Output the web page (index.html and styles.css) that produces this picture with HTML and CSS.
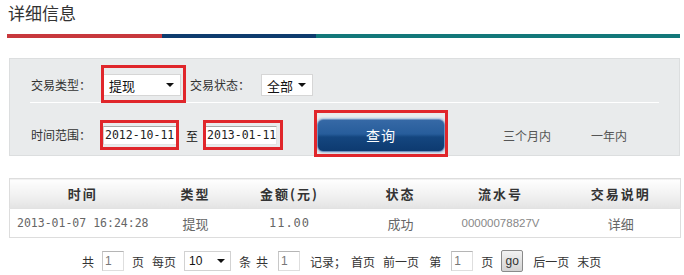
FILE: index.html
```html
<!DOCTYPE html>
<html lang="zh-CN">
<head>
<meta charset="utf-8">
<title>详细信息</title>
<link rel="stylesheet" href="styles.css">
</head>
<body>
<div class="page">
  <h1 class="title">详细信息</h1>
  <div class="bar"><span class="seg red"></span><span class="seg navy"></span><span class="seg teal"></span></div>

  <div class="filter">
    <div class="frow r1">
      <span class="lbl">交易类型：</span>
      <span class="sel sel-type hl hl-sel"><span>提现</span><i class="tri"></i></span>
      <span class="lbl lbl2">交易状态：</span>
      <span class="sel sel-status"><span>全部</span><i class="tri"></i></span>
    </div>
    <div class="divider"></div>
    <div class="frow r2">
      <span class="lbl">时间范围：</span>
      <span class="inp hl hl-d1">2012-10-11</span>
      <span class="to">至</span>
      <span class="inp inp2 hl hl-d2">2013-01-11</span>
      <span class="btn hl hl-btn">查询</span>
      <span class="quick q1">三个月内</span>
      <span class="quick q2">一年内</span>
    </div>
  </div>

  <table class="grid">
    <thead>
      <tr>
        <th class="c1">时间</th>
        <th class="c2">类型</th>
        <th class="c3">金额(元)</th>
        <th class="c4">状态</th>
        <th class="c5">流水号</th>
        <th class="c6">交易说明</th>
      </tr>
    </thead>
    <tbody>
      <tr>
        <td class="c1 mono">2013-01-07 16:24:28</td>
        <td class="c2">提现</td>
        <td class="c3 mono amt">11.00</td>
        <td class="c4">成功</td>
        <td class="c5 serial">00000078827V</td>
        <td class="c6">详细</td>
      </tr>
    </tbody>
  </table>

  <div class="pager">
    <span>共</span>
    <span class="pinp">1</span>
    <span>页</span>
    <span>每页</span>
    <span class="psel"><span>10</span><i class="tri"></i></span>
    <span>条</span>
    <span class="tight">共</span>
    <span class="pinp wide">1</span>
    <span class="wide">记录；</span>
    <span class="tight">首页</span>
    <span>前一页</span>
    <span class="wide">第</span>
    <span class="pinp wide">1</span>
    <span>页</span>
    <span class="go">go</span>
    <span class="wide">后一页</span>
    <span>末页</span>
  </div>
</div>
</body>
</html>
```

FILE: styles.css
```css
* { box-sizing: border-box; }

body {
  margin: 0;
  background: #ffffff;
  color: #333333;
  font-family: "Noto Sans CJK SC", "Liberation Sans", sans-serif;
  font-size: 12px;
}

.page { width: 684px; }

.title {
  margin: 0;
  height: 34px;
  padding: 3px 0 0 8px;
  font-size: 17px;
  line-height: 20px;
  font-weight: normal;
  color: #333333;
}

.bar {
  display: flex;
  margin-left: 7px;
  width: 673px;
  height: 4px;
}
.seg { display: block; height: 4px; }
.red { width: 155px; background: #c8383d; }
.navy { width: 154px; background: #0e3c6e; }
.teal { flex: 1; background: #13787a; }

.filter {
  margin: 20px 0 0 9px;
  width: 671px;
  height: 98px;
  background: #e9ebec;
  border: 1px solid #dcdedf;
}

.frow {
  display: flex;
  align-items: center;
  padding-left: 21px;
}
.r1 { height: 43px; padding-top: 9px; }
.r2 { height: 52px; padding-top: 12px; }

.divider {
  height: 1px;
  margin: 0 20px;
  background: #ffffff;
}

.lbl { color: #333333; line-height: 16px; white-space: nowrap; }
.lbl2 { margin-left: 9px; }

.sel {
  display: flex;
  align-items: center;
  height: 22px;
  background: #ffffff;
  border: 1px solid #d6d6d6;
  padding: 0 6px 0 5px;
  color: #111111;
  font-size: 13px;
}
.sel-type { width: 78px; margin-left: 12px; }
.sel-status { width: 52px; margin-left: 11px; }

.tri {
  display: block;
  margin-left: auto;
  width: 0;
  height: 0;
  border-style: solid;
  border-width: 4px 4px 0 4px;
  border-color: #111111 transparent transparent transparent;
}

.hl { position: relative; }
.hl::after {
  content: "";
  position: absolute;
  border: 3px solid #e0262b;
  pointer-events: none;
}
.hl-sel::after { top: -10px; bottom: -8px; left: -3px; right: -6px; }
.hl-d1::after { top: -7px; bottom: -6px; left: -4px; right: -3px; }
.hl-d2::after { top: -7px; bottom: -6px; left: -3px; right: -7px; }
.hl-btn::after { top: -10px; bottom: -6px; left: -4px; right: -4px; }

.inp {
  display: block;
  width: 74px;
  height: 19px;
  margin-left: 12px;
  padding: 0 0 0 1px;
  background: #ffffff;
  border: 1px solid #e4e4e4;
  border-top-color: #a8a8a8;
  border-left-color: #cfcfcf;
  font-family: "DejaVu Sans Mono", "Liberation Mono", monospace;
  font-size: 11.5px;
  line-height: 17px;
  color: #222222;
  white-space: nowrap;
}
.inp2 { width: 72px; margin-left: 7px; }

.to { margin-left: 9px; color: #111111; }

.btn {
  display: flex;
  align-items: center;
  justify-content: center;
  width: 128px;
  height: 33px;
  margin-left: 40px;
  border-radius: 6px;
  border: 1px solid #6d92c0;
  box-shadow: 0 0 2px 1px #a9c0dc;
  background: linear-gradient(to bottom, #3669a6 0%, #275d9b 45%, #14467f 55%, #0d3a70 100%);
  color: #ffffff;
  font-size: 14px;
  letter-spacing: 1px;
}

.quick { color: #555555; white-space: nowrap; }
.q1 { margin-left: 58px; }
.q2 { margin-left: 40px; }

.grid {
  margin: 22px 0 0 9px;
  width: 671px;
  border-collapse: collapse;
  table-layout: fixed;
  border: 1px solid #dddddd;
}
.grid th, .grid td { text-align: center; padding: 0; white-space: nowrap; }
.grid th {
  height: 30px;
  font-size: 13px;
  font-weight: bold;
  color: #333333;
  letter-spacing: 2px;
  background: linear-gradient(to bottom, #fefefe 0%, #f1f1f1 55%, #e3e3e3 100%);
  border-bottom: 1px solid #e2e2e2;
}
.grid td {
  height: 29px;
  color: #666666;
  font-size: 13px;
  background: #ffffff;
}
.c1 { width: 146px; }
.c2 { width: 80px; }
.c3 { width: 108px; }
.c4 { width: 114px; }
.c5 { width: 86px; }
.c6 { width: 137px; padding-left: 18px !important; }
.grid td.mono { font-family: "DejaVu Sans Mono", "Liberation Mono", monospace; font-size: 11.5px; }
.grid td.amt { font-size: 12px; letter-spacing: 1px; }
.grid td.serial { font-family: "Liberation Sans", sans-serif; font-size: 11.5px; color: #888888; }

.pager {
  display: flex;
  align-items: center;
  gap: 8px;
  margin-top: 12px;
  padding-left: 82px;
  height: 22px;
  color: #333333;
  white-space: nowrap;
}
.pager .wide { margin-left: 2px; }
.pager .tight { margin-left: -3px; }

.pinp {
  display: block;
  width: 22px;
  height: 20px;
  padding-left: 2px;
  background: #ffffff;
  border: 1px solid #dedede;
  border-top-color: #b5b5b5;
  border-left-color: #c8c8c8;
  font-family: "Liberation Sans", sans-serif;
  font-size: 12px;
  line-height: 18px;
  color: #777777;
}

.psel {
  display: flex;
  align-items: center;
  width: 47px;
  height: 20px;
  padding: 0 5px 0 4px;
  background: #ffffff;
  border: 1px solid #d2d2d2;
  font-family: "Liberation Sans", sans-serif;
  font-size: 12px;
  color: #111111;
}

.go {
  display: flex;
  align-items: center;
  justify-content: center;
  width: 22px;
  height: 22px;
  border: 1px solid #8a8a8a;
  border-radius: 2px;
  background: linear-gradient(to bottom, #f2f2f2, #d4d4d4);
  font-family: "Liberation Sans", sans-serif;
  font-size: 12px;
  color: #333333;
}
```
